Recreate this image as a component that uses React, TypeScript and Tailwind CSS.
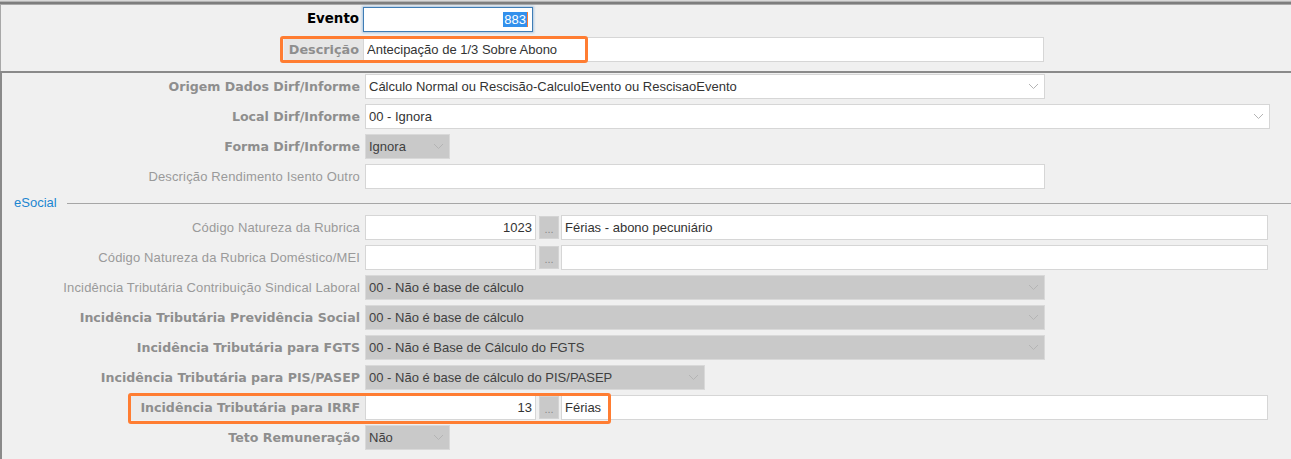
import React from "react";

const Chevron = () => (
  <svg width="11" height="7" viewBox="0 0 11 7" className="shrink-0">
    <polyline points="1,1 5.5,5.5 10,1" fill="none" stroke="#b4b4b4" strokeWidth="1" />
  </svg>
);

const boldFont = { fontFamily: '"DejaVu Sans", Verdana, sans-serif' };

function Box({ w, gray, children, right, chevron }: { w: number; gray?: boolean; children?: React.ReactNode; right?: boolean; chevron?: boolean }) {
  return (
    <div
      className={`h-full shrink-0 border flex items-center px-[3px] ${gray ? "bg-[#c9c9c9] border-[#d9d9d9] text-[#404040]" : "bg-white border-[#d6d6d6] text-[#333333]"}`}
      style={{ width: w }}
    >
      <span className="flex-1 whitespace-nowrap overflow-hidden pt-[1px]" style={{ textAlign: right ? "right" : "left" }}>{children}</span>
      {chevron && <span className="pr-[2px] flex items-center"><Chevron /></span>}
    </div>
  );
}

function Dots() {
  return (
    <div className="h-[23px] self-center w-[20px] shrink-0 bg-[#c9c9c9] border border-[#d4d4d4] flex items-end justify-center pb-[3px] text-[#8a8a8a] text-[11px] leading-none ml-[3px] mr-[2px]">
      ...
    </div>
  );
}

function Row({ label, bold, children, labelBg }: { label: string; bold?: boolean; children?: React.ReactNode; labelBg?: boolean }) {
  return (
    <div className="flex h-[25px] items-stretch">
      <div className="w-[363px] shrink-0 flex justify-end items-stretch">
        <div
          className={`flex items-center justify-end pr-[5px] whitespace-nowrap pt-[1px] ${bold ? "font-bold text-[#8e8e8e] text-[12.6px]" : "text-[#9a9a9a] tracking-[0.15px]"} ${labelBg ? "bg-[#ebebeb] pl-[9px]" : ""}`}
          style={bold ? boldFont : undefined}
        >
          {label}
        </div>
      </div>
      {children}
    </div>
  );
}

export default function App() {
  return (
    <div
      className="w-[1291px] h-[459px] bg-[#f0f0f0] overflow-hidden relative text-[13px]"
      style={{ fontFamily: '"Liberation Sans", Arial, sans-serif' }}
    >
      {/* top frame lines */}
      <div className="h-[1px] bg-[#d9d9d9]" />
      <div className="h-[1px] bg-[#b4b4b4]" />
      <div className="h-[2px] bg-[#7e7e7e]" />
      <div className="h-[1px] bg-[#a9a9a9]" />

      {/* header section */}
      <div className="h-[66px] border-l border-[#a8a8a8] pt-[2px] flex flex-col gap-[5px]">
        <div className="flex h-[25px] items-stretch">
          <div className="w-[362px] shrink-0 flex items-center justify-end pr-[4px] font-bold text-black text-[13.4px]" style={boldFont}>Evento</div>
          <div className="w-[170px] h-full bg-white border border-[#3f7db5] shadow-[0_0_2px_1px_rgba(90,150,210,0.45)] flex items-center justify-end pr-[4px]">
            <span className="bg-[#3390ec] text-white leading-[15px] px-[1px]">883</span>
            <span className="w-[1px] h-[15px] bg-[#ff7a30]" />
          </div>
        </div>
        <div className="flex h-[25px] items-stretch">
          <div className="w-[362px] shrink-0 flex justify-end">
            <div className="bg-[#e6e6e6] flex items-center pl-[5px] pr-[4px] pt-[1px] text-[#8e8e8e] text-[12.8px] font-bold" style={boldFont}>Descrição</div>
          </div>
          <Box w={681}>Antecipação de 1/3 Sobre Abono</Box>
        </div>
      </div>

      {/* main panel */}
      <div className="border-t-2 border-l-2 border-[#8a8a8a] h-[400px] pt-[1px] flex flex-col gap-[5px]">
        <Row label="Origem Dados Dirf/Informe" bold>
          <Box w={680} chevron>Cálculo Normal ou Rescisão-CalculoEvento ou RescisaoEvento</Box>
        </Row>
        <Row label="Local Dirf/Informe" bold>
          <Box w={905} chevron>00 - Ignora</Box>
        </Row>
        <Row label="Forma Dirf/Informe" bold>
          <Box w={85} gray chevron>Ignora</Box>
        </Row>
        <Row label="Descrição Rendimento Isento Outro">
          <Box w={680} />
        </Row>

        <div className="h-[16px] flex items-center pl-[12px] pt-[2px]">
          <span className="text-[#1c86d0] pr-[10px]">eSocial</span>
          <div className="flex-1 h-[1px] bg-[#a6a6a6] mt-[1px]" />
        </div>

        <Row label="Código Natureza da Rubrica">
          <Box w={171} right>1023</Box>
          <Dots />
          <Box w={707}>Férias - abono pecuniário</Box>
        </Row>
        <Row label="Código Natureza da Rubrica Doméstico/MEI">
          <Box w={171} right />
          <Dots />
          <Box w={707} />
        </Row>
        <Row label="Incidência Tributária Contribuição Sindical Laboral">
          <Box w={680} gray chevron>00 - Não é base de cálculo</Box>
        </Row>
        <Row label="Incidência Tributária Previdência Social" bold>
          <Box w={680} gray chevron>00 - Não é base de cálculo</Box>
        </Row>
        <Row label="Incidência Tributária para FGTS" bold>
          <Box w={680} gray chevron>00 - Não é Base de Cálculo do FGTS</Box>
        </Row>
        <Row label="Incidência Tributária para PIS/PASEP" bold>
          <Box w={340} gray chevron>00 - Não é base de cálculo do PIS/PASEP</Box>
        </Row>
        <Row label="Incidência Tributária para IRRF" bold labelBg>
          <Box w={171} right>13</Box>
          <Dots />
          <Box w={707}>Férias</Box>
        </Row>
        <Row label="Teto Remuneração" bold>
          <Box w={85} gray chevron>Não</Box>
        </Row>
      </div>

      {/* highlight overlays */}
      <div className="absolute left-[280px] top-[36px] w-[308px] h-[27px] border-[3px] border-[#ff7d32] rounded-[3px] pointer-events-none" />
      <div className="absolute left-[128px] top-[393px] w-[483px] h-[31px] border-[3px] border-[#ff7d32] rounded-[3px] pointer-events-none" />
    </div>
  );
}
